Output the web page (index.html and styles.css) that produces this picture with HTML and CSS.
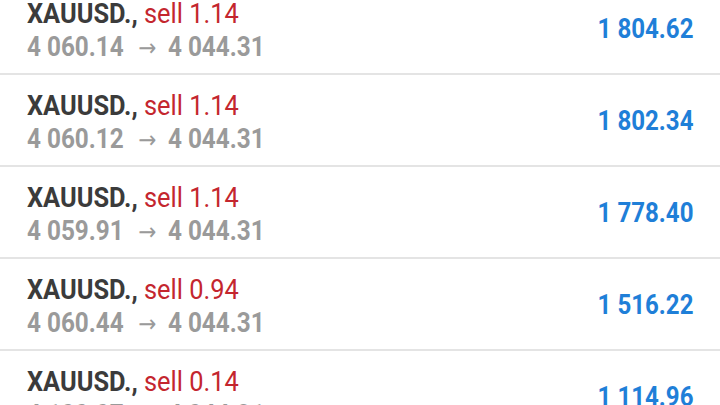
FILE: index.html
```html
<!DOCTYPE html>
<html>
<head>
<meta charset="utf-8">
<link rel="stylesheet" href="styles.css">
</head>
<body>
<div class="list">
  <div class="row">
    <div class="info">
      <div class="title"><span class="sq"><span class="sym">XAUUSD.,</span> <span class="side">sell 1.14</span></span></div>
      <div class="prices"><span class="sq">4 060.14<span class="arrow">→</span>4 044.31</span></div>
    </div>
    <div class="profit"><span class="sqr">1 804.62</span></div>
  </div>
  <div class="row">
    <div class="info">
      <div class="title"><span class="sq"><span class="sym">XAUUSD.,</span> <span class="side">sell 1.14</span></span></div>
      <div class="prices"><span class="sq">4 060.12<span class="arrow">→</span>4 044.31</span></div>
    </div>
    <div class="profit"><span class="sqr">1 802.34</span></div>
  </div>
  <div class="row">
    <div class="info">
      <div class="title"><span class="sq"><span class="sym">XAUUSD.,</span> <span class="side">sell 1.14</span></span></div>
      <div class="prices"><span class="sq">4 059.91<span class="arrow">→</span>4 044.31</span></div>
    </div>
    <div class="profit"><span class="sqr">1 778.40</span></div>
  </div>
  <div class="row">
    <div class="info">
      <div class="title"><span class="sq"><span class="sym">XAUUSD.,</span> <span class="side">sell 0.94</span></span></div>
      <div class="prices"><span class="sq">4 060.44<span class="arrow">→</span>4 044.31</span></div>
    </div>
    <div class="profit"><span class="sqr">1 516.22</span></div>
  </div>
  <div class="row">
    <div class="info">
      <div class="title"><span class="sq"><span class="sym">XAUUSD.,</span> <span class="side">sell 0.14</span></span></div>
      <div class="prices"><span class="sq">4 100.07<span class="arrow">→</span>4 044.31</span></div>
    </div>
    <div class="profit"><span class="sqr">1 114.96</span></div>
  </div>
</div>
</body>
</html>
```
FILE: styles.css
```css
html, body {
  margin: 0;
  padding: 0;
  background: #ffffff;
  overflow: hidden;
}
body {
  width: 720px;
  height: 405px;
  font-family: Roboto, "Liberation Sans", sans-serif;
}
.list {
  margin-top: -17px;
}
.row {
  height: 90px;
  border-bottom: 2px solid #e4e4e4;
  display: flex;
  align-items: center;
  justify-content: space-between;
  padding: 0 27px;
}
.info {
  display: flex;
  flex-direction: column;
  padding-top: 6px;
}
.title, .prices {
  font-size: 27px;
  line-height: 33px;
  white-space: nowrap;
}
.title .sq {
  transform: scaleX(0.94);
}
.prices .sq {
  transform: scaleX(0.9);
}
.sq {
  display: inline-block;
  transform-origin: left center;
}
.sqr {
  display: inline-block;
  transform: scaleX(0.86);
  transform-origin: right center;
}
.sym {
  font-weight: 700;
  color: #3b3b3b;
}
.side {
  color: #c4262e;
}
.prices {
  font-weight: 700;
  color: #9a9a9a;
}
.arrow {
  display: inline-block;
  font-family: "DejaVu Sans", sans-serif;
  font-weight: 400;
  font-size: 24px;
  margin: 0 13px 0 16px;
}
.profit {
  font-size: 28px;
  font-weight: 700;
  color: #1f7fd8;
  white-space: nowrap;
}
```
